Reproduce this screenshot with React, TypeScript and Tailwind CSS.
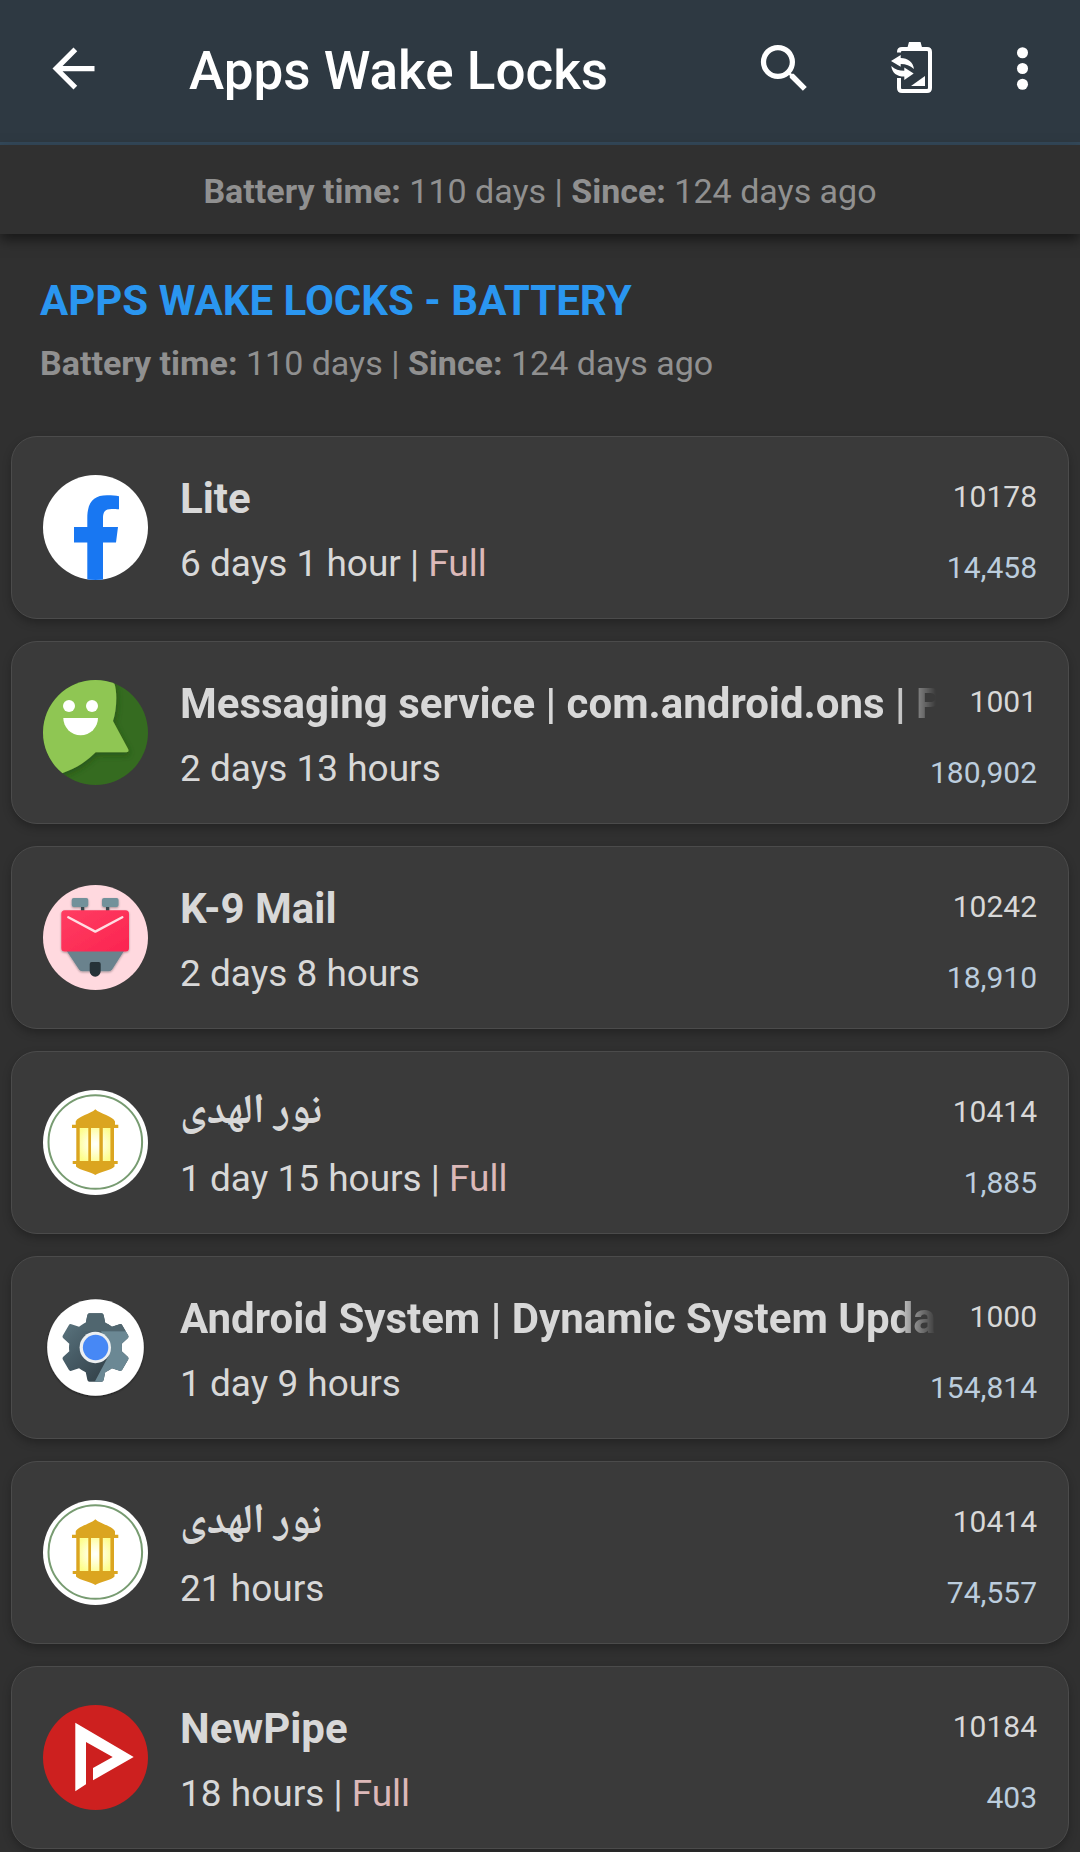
import type { ReactNode } from "react";

function FacebookLiteIcon() {
  return (
    <svg viewBox="0 0 105 105" className="size-full" aria-hidden="true">
      <defs>
        <clipPath id="fb-clip">
          <circle cx="52.5" cy="52.5" r="52.5" />
        </clipPath>
      </defs>
      <g clipPath="url(#fb-clip)">
        <rect width="105" height="105" fill="#fff" />
        <path
          d="M44.3 105V67.6H31V52H44.3V43C44.3 27 51 20.3 64 20.3C69 20.3 73 20.6 76 21.2V34.3C74 34 71 33.9 68.5 33.9C62 33.9 60 37 60 43V52H75L73 67.6H60V105Z"
          fill="#1877f2"
        />
      </g>
    </svg>
  );
}

function MessagingIcon() {
  return (
    <svg viewBox="0 0 105 105" className="size-full" aria-hidden="true">
      <defs>
        <clipPath id="msg-clip">
          <circle cx="52.5" cy="52.5" r="52.5" />
        </clipPath>
        <filter id="msg-shadow" x="-20%" y="-20%" width="140%" height="140%">
          <feDropShadow dx="1" dy="3" stdDeviation="3" floodColor="#1d4a12" floodOpacity="0.6" />
        </filter>
      </defs>
      <g clipPath="url(#msg-clip)">
        <rect width="105" height="105" fill="#356b20" />
        <path
          d="M71.3 -5V3.3C72.6 7 73.3 12 73.3 18C73.3 27 72 35 70 41L85.1 69C86 70.8 85.5 72.3 83.5 72.3H52.7C44 81 34 88 20.3 92.7L-5 105V-5Z"
          fill="#8fc652"
          filter="url(#msg-shadow)"
        />
        <circle cx="26" cy="26" r="6" fill="#fff" />
        <circle cx="49" cy="26" r="6" fill="#fff" />
        <path d="M20.3 38H55A17.35 17.2 0 0 1 20.3 38Z" fill="#fff" />
      </g>
    </svg>
  );
}

function K9Icon() {
  return (
    <svg viewBox="0 0 105 105" className="size-full" aria-hidden="true">
      <defs>
        <linearGradient id="k9-red" x1="0" y1="0" x2="1" y2="1">
          <stop offset="0" stopColor="#ff3d62" />
          <stop offset="1" stopColor="#fb2450" />
        </linearGradient>
        <filter id="k9-shadow" x="-20%" y="-20%" width="140%" height="140%">
          <feDropShadow dx="0" dy="1" stdDeviation="1" floodColor="#000" floodOpacity="0.35" />
        </filter>
      </defs>
      <circle cx="52.5" cy="52.5" r="52.5" fill="#ffd9df" />
      <g filter="url(#k9-shadow)">
        <path d="M23.7 66L36 84.5Q37.2 86.3 39 86.3H66Q68 86.3 69.2 84.5L81 66Z" fill="#6b828d" />
        <rect x="38" y="20" width="3.3" height="7" fill="#39454b" />
        <rect x="63" y="20" width="3.3" height="7" fill="#39454b" />
        <rect x="28.7" y="13" width="16.6" height="9" rx="2" fill="#72919a" />
        <rect x="59" y="13" width="16.6" height="9" rx="2" fill="#72919a" />
        <rect x="18.3" y="25.3" width="67.7" height="41.2" rx="3.5" fill="url(#k9-red)" />
      </g>
      <path
        d="M25.3 32.3L52.3 46.6L79.3 32.3"
        fill="none"
        stroke="#ffdce2"
        strokeWidth="2.4"
        strokeLinecap="round"
        strokeLinejoin="round"
      />
      <path d="M46.7 79Q46.7 77 48.7 77H55.7Q57.7 77 57.7 79V86.2A5.5 5.5 0 0 1 46.7 86.2Z" fill="#263238" />
    </svg>
  );
}

function LanternIcon() {
  return (
    <svg viewBox="0 0 105 105" className="size-full" aria-hidden="true">
      <defs>
        <radialGradient id="lantern-glow" gradientUnits="userSpaceOnUse" cx="52.3" cy="54" r="20">
          <stop offset="0" stopColor="#ffffff" />
          <stop offset="0.45" stopColor="#ffffd0" />
          <stop offset="1" stopColor="#fdfd8a" />
        </radialGradient>
      </defs>
      <circle cx="52.5" cy="52.5" r="52.5" fill="#fff" />
      <circle cx="52.3" cy="52" r="46.8" fill="none" stroke="#779b71" strokeWidth="2" />
      <path
        d="M52.3 19.3C57 24 70 26 72 31.5V34.7H75.3V38H71V71H74.7V74H71.5V76.5C69 80 56 82 52.3 85C49 82 36 80 33 76.5V74H29.7V71H33.3V38H29V34.7H32.7V31.5C35 26 48 24 52.3 19.3Z"
        fill="#dba520"
      />
      <g fill="url(#lantern-glow)">
        <rect x="36.7" y="38" width="8.6" height="33" />
        <rect x="48" y="38" width="8.4" height="33" />
        <rect x="59.8" y="38" width="7.6" height="33" />
      </g>
    </svg>
  );
}

function SystemGearIcon() {
  return (
    <svg viewBox="0 0 105 105" className="size-full" aria-hidden="true">
      <defs>
        <linearGradient id="gear-dark" gradientUnits="userSpaceOnUse" x1="20" y1="30" x2="62" y2="72">
          <stop offset="0" stopColor="#5a737d" />
          <stop offset="0.5" stopColor="#475c66" />
          <stop offset="1" stopColor="#37474f" />
        </linearGradient>
        <filter id="gear-shadow" x="-20%" y="-20%" width="140%" height="140%">
          <feDropShadow dx="0" dy="1" stdDeviation="1" floodColor="#000" floodOpacity="0.5" />
        </filter>
        <clipPath id="gear-clip">
          <circle cx="52.5" cy="52.5" r="26.5" />
          <path d="M46.5 18.2H58.5Q60.3 18.2 60.6 20L62.5 29L66 34V71L62.5 76L60.6 85Q60.3 86.8 58.5 86.8H46.5Q44.7 86.8 44.4 85L42.5 76L39 71V34L42.5 29L44.4 20Q44.7 18.2 46.5 18.2Z" />
          <path
            transform="rotate(60 52.5 52.5)"
            d="M46.5 18.2H58.5Q60.3 18.2 60.6 20L62.5 29L66 34V71L62.5 76L60.6 85Q60.3 86.8 58.5 86.8H46.5Q44.7 86.8 44.4 85L42.5 76L39 71V34L42.5 29L44.4 20Q44.7 18.2 46.5 18.2Z"
          />
          <path
            transform="rotate(120 52.5 52.5)"
            d="M46.5 18.2H58.5Q60.3 18.2 60.6 20L62.5 29L66 34V71L62.5 76L60.6 85Q60.3 86.8 58.5 86.8H46.5Q44.7 86.8 44.4 85L42.5 76L39 71V34L42.5 29L44.4 20Q44.7 18.2 46.5 18.2Z"
          />
        </clipPath>
      </defs>
      <circle cx="52.5" cy="52.5" r="48.3" fill="#fff" filter="url(#gear-shadow)" />
      <g clipPath="url(#gear-clip)">
        <rect width="105" height="105" fill="url(#gear-dark)" />
        <path d="M40 15H70L66 30L90 25V36.3H40Z" fill="#50666f" />
        <path d="M58 36.3H105V105H42L66 60Z" fill="#6b8894" />
      </g>
      <circle cx="52.3" cy="52.5" r="15.7" fill="#eceff1" />
      <circle cx="52.6" cy="52.5" r="12.7" fill="#4788f5" />
    </svg>
  );
}

function NewPipeIcon() {
  return (
    <svg viewBox="0 0 105 105" className="size-full" aria-hidden="true">
      <circle cx="52.5" cy="52.5" r="52.5" fill="#cd201f" />
      <path
        d="M32.3 17.7L90.7 52L50 75.3V63L69.7 52L43 37V79.3L32.3 86.3Z"
        fill="#fff"
      />
    </svg>
  );
}

function BatteryHistoryIcon() {
  return (
    <svg viewBox="0 0 63 63" className="size-full" aria-hidden="true">
      <path
        d="M19 15.5V15Q19 12 22 12H47Q50 12 50 15V51Q50 54 47 54H22Q19 54 19 51V41"
        fill="none"
        stroke="#fff"
        strokeWidth="4"
      />
      <path d="M27 12L29 5H40.5L42.5 12Z" fill="#fff" />
      <path d="M45 39V49H31Z" fill="#fff" />
      <path d="M11 24L20.7 18V21C28 21 33 25 34 32C30 28.5 26 27 20.7 27V29.7Z" fill="#fff" />
      <path d="M33.7 36.5L24.3 43V39.6C17 39.6 12 36 11.3 29C15 32.5 19 33.7 24.3 33.7V30.5Z" fill="#fff" />
    </svg>
  );
}

type Entry = {
  title: string;
  arabic?: boolean;
  time: string;
  full?: boolean;
  uid: string;
  count: string;
  icon: ReactNode;
};

const entries: Entry[] = [
  { title: "Lite", time: "6 days 1 hour", full: true, uid: "10178", count: "14,458", icon: <FacebookLiteIcon /> },
  {
    title: "Messaging service | com.android.ons | P",
    time: "2 days 13 hours",
    uid: "1001",
    count: "180,902",
    icon: <MessagingIcon />,
  },
  { title: "K-9 Mail", time: "2 days 8 hours", uid: "10242", count: "18,910", icon: <K9Icon /> },
  { title: "نور الهدى", arabic: true, time: "1 day 15 hours", full: true, uid: "10414", count: "1,885", icon: <LanternIcon /> },
  {
    title: "Android System | Dynamic System Upda",
    time: "1 day 9 hours",
    uid: "1000",
    count: "154,814",
    icon: <SystemGearIcon />,
  },
  { title: "نور الهدى", arabic: true, time: "21 hours", uid: "10414", count: "74,557", icon: <LanternIcon /> },
  { title: "NewPipe", time: "18 hours", full: true, uid: "10184", count: "403", icon: <NewPipeIcon /> },
];

function BatterySummary() {
  return (
    <>
      <b className="font-bold">Battery time:</b> 110 days | <b className="font-bold">Since:</b> 124 days ago
    </>
  );
}

function EntryCard({ entry }: { entry: Entry }) {
  const fades = entry.title.length > 30;
  return (
    <li className="flex items-center gap-8 rounded-[26px] border border-[#4b4b4b] bg-[#3a3a3a] px-[31px] shadow-[0_4px_8px_rgba(0,0,0,0.25)]">
      <div className="size-[105px] shrink-0">{entry.icon}</div>
      <div className="min-w-0 flex-1 pt-[37px] pb-5">
        <div className="flex items-start justify-between gap-[34px]">
          <h3
            className={
              "min-w-0 text-[42px] font-bold whitespace-nowrap text-[#d8d8d8] " +
              (entry.arabic
                ? "h-[50px] font-['Noto_Naskh_Arabic','Noto_Sans_Arabic','DejaVu_Sans',sans-serif] text-[36px] leading-[50px] "
                : "leading-[50px] ") +
              (fades ? "overflow-hidden [mask-image:linear-gradient(to_right,#000_calc(100%-40px),transparent)]" : "")
            }
          >
            {entry.title}
          </h3>
          <span className="shrink-0 text-[30px] leading-[45px] text-[#d8d8d8]">{entry.uid}</span>
        </div>
        <div className="mt-[14px] flex items-start justify-between">
          <p className="text-[37px] leading-[51px] text-[#d8d8d8]">
            {entry.time}
            {entry.full && (
              <>
                {" | "}
                <span className="text-[#dcb8b8]">Full</span>
              </>
            )}
          </p>
          <span className="text-[30px] leading-[60px] text-[#bccddd]">{entry.count}</span>
        </div>
      </div>
    </li>
  );
}

export default function App() {
  return (
    <div className="min-h-screen bg-[#303030] font-[Roboto,sans-serif]">
      <header className="flex items-start border-b-[3px] border-[#34495a] bg-[#2e3942] py-[37px] pr-[26px] pl-[42px] text-white">
        <button type="button" aria-label="Back" className="size-[63px] shrink-0">
          <svg viewBox="0 0 24 24" fill="currentColor" className="size-full" aria-hidden="true">
            <path d="M20 11H7.83l5.59-5.59L12 4l-8 8 8 8 1.41-1.41L7.83 13H20v-2z" />
          </svg>
        </button>
        <h1 className="ml-[84px] min-w-0 flex-1 truncate text-[53px] leading-[68px] font-medium">Apps Wake Locks</h1>
        <button type="button" aria-label="Search" className="size-[63px] shrink-0">
          <svg viewBox="0 0 24 24" fill="currentColor" className="size-full" aria-hidden="true">
            <path d="M15.5 14h-.79l-.28-.27A6.471 6.471 0 0 0 16 9.5 6.5 6.5 0 1 0 9.5 16c1.61 0 3.09-.59 4.23-1.57l.27.28v.79l5 4.99L20.49 19l-4.99-5zm-6 0C7.01 14 5 11.99 5 9.5S7.01 5 9.5 5 14 7.01 14 9.5 11.99 14 9.5 14z" />
          </svg>
        </button>
        <button type="button" aria-label="Battery history" className="ml-16 size-[63px] shrink-0">
          <BatteryHistoryIcon />
        </button>
        <button type="button" aria-label="More options" className="ml-12 size-[63px] shrink-0">
          <svg viewBox="0 0 24 24" fill="currentColor" className="size-full" aria-hidden="true">
            <circle cx="12" cy="6" r="2.1" />
            <circle cx="12" cy="12" r="2.1" />
            <circle cx="12" cy="18" r="2.1" />
          </svg>
        </button>
      </header>

      <p className="bg-[#303030] pt-[25px] pb-[21px] text-center text-[34px] leading-[43px] text-[#909090] shadow-[0_6px_12px_rgba(0,0,0,0.5)]">
        <BatterySummary />
      </p>

      <main className="pt-[42px]">
        <section className="px-10">
          <h2 className="text-[42px] leading-[50px] font-bold text-[#2a96f0]">APPS WAKE LOCKS - BATTERY</h2>
          <p className="mt-4 text-[34px] leading-[43px] text-[#909090]">
            <BatterySummary />
          </p>
        </section>
        <ul className="mt-[51px] flex flex-col gap-[22px] px-[11px]">
          {entries.map((entry) => (
            <EntryCard key={entry.uid + entry.count} entry={entry} />
          ))}
        </ul>
      </main>
    </div>
  );
}
